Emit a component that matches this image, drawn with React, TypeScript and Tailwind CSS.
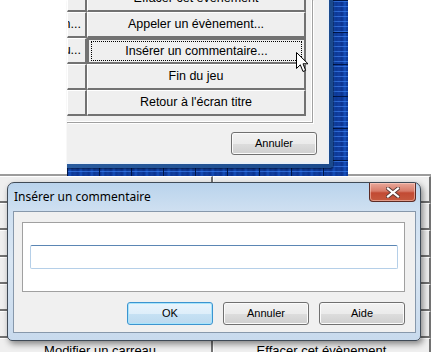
import React from "react";

const comic = "font-['Comic_Sans_MS','Liberation_Sans',sans-serif]";

const pattern =
    "bg-[#0b3796] bg-[linear-gradient(#001648_1px,transparent_1px),linear-gradient(90deg,#001648_1px,transparent_1px),repeating-linear-gradient(0deg,transparent_0px,transparent_3px,rgba(70,140,255,0.55)_3px,rgba(70,140,255,0.55)_4px),repeating-linear-gradient(90deg,#0a3290_0px,#1750bb_3px,#0b3796_5px,#123f9f_8px,#0a3290_11px)] bg-[length:32px_32px,32px_32px,7px_5px,11px_11px]";

const topRows = [
    {left: "", right: "Effacer cet évènement"},
    {left: "Afficher une animation...", right: "Appeler un évènement..."},
    {left: "Modifier un carreau...", right: "Insérer un commentaire...", focused: true},
    {left: "", right: "Fin du jeu"},
    {left: "", right: "Retour à l'écran titre"},
];

const EventButton: React.FC<{label: string; focused?: boolean; align?: "center" | "end"}> = ({label, focused, align = "center"}) => (
    <div
        className={`h-[26px] flex items-center bg-[#efefef] border-b-2 border-r-2 border-[#727272] ${focused ? "border-t-2 border-l-2" : "border-t border-l border-t-white border-l-white"} ${align === "end" ? "justify-end pr-[4px]" : "justify-center"} overflow-hidden whitespace-nowrap text-[12.5px] text-black ${comic}`}
    >
        {focused ? (
            <div className="mx-[2px] h-[20px] w-full flex items-center justify-center border border-dotted border-black">
                {label}
            </div>
        ) : (
            label
        )}
    </div>
);

const VistaButton: React.FC<{label: string; primary?: boolean}> = ({label, primary}) => (
    <div
        className={`w-[86px] h-[23px] rounded-[3px] border flex items-center justify-center text-[11px] font-medium text-black ${comic} ${
            primary
                ? "border-[#3c94d0] shadow-[inset_0_0_0_1px_#a8e4fb] bg-[linear-gradient(180deg,#e9f4fc_0%,#deeefa_50%,#c6e1f4_51%,#bcd9ef_100%)]"
                : "border-[#707070] shadow-[inset_0_0_0_1px_#fbfbfb] bg-[linear-gradient(180deg,#f2f2f2_0%,#ebebeb_50%,#dddddd_51%,#cfcfcf_100%)]"
        }`}
    >
        {label}
    </div>
);

const Cursor = () => (
    <svg className="absolute left-[296px] top-[52px]" width="13" height="21" viewBox="0 0 13 21">
        <path
            d="M0.5 0.5 L0.5 16.5 L4.3 12.8 L7 19.5 L9.6 18.4 L7 11.8 L12 11.8 Z"
            fill="#fff"
            stroke="#000"
            strokeWidth="1"
        />
    </svg>
);

export default function App() {
    return (
        <div className="relative w-[431px] h-[352px] overflow-hidden bg-white">
            {/* window behind the comment dialog */}
            <div className="absolute left-0 top-[174px] w-[431px] h-[190px] bg-[#efefef] border-t-2 border-[#9c9c9c]">
                <div className="grid grid-cols-[213px_218px]">
                    {Array.from({length: 7}).map((_, i) => (
                        <React.Fragment key={i}>
                            <div className={`h-[27px] flex items-center justify-center bg-[#efefef] border-b-2 border-r-2 border-[#727272] border-t border-t-white text-[13px] ${comic}`}>
                                {i === 6 ? "Modifier un carreau..." : ""}
                            </div>
                            <div className={`h-[27px] flex items-center justify-center bg-[#efefef] border-b-2 border-r-2 border-[#727272] border-t border-l border-t-white border-l-white text-[13px] ${comic}`}>
                                {i === 6 ? "Effacer cet évènement" : ""}
                            </div>
                        </React.Fragment>
                    ))}
                </div>
            </div>

            {/* desktop pattern around the event window */}
            <div className={`absolute left-[67px] top-0 w-[281px] h-[176px] ${pattern}`}/>

            {/* event commands window */}
            <div className="absolute left-[67px] top-0 w-[266px] h-[168px] bg-[linear-gradient(90deg,#2a5c9e,#1b4a8c)] pr-[4px] pb-[4px] rounded-br-[4px] shadow-[1px_1px_2px_rgba(0,0,0,0.5)]">
                <div className="w-full h-full bg-[#f0f0f0] border-r-2 border-b-2 border-[#e9eff7] overflow-hidden flex flex-col">
                    <div className="w-[246px] h-[123px] border-r border-b border-[#a0a0a0] shadow-[1px_1px_0_#fff] overflow-hidden">
                        <div className="w-[245px] h-[122px] border-r border-b border-white overflow-hidden">
                            <div className="-mt-[14px] grid grid-cols-[20px_219px]">
                                {topRows.map((row, i) => (
                                    <React.Fragment key={i}>
                                        <EventButton label={row.left} align="end"/>
                                        <EventButton label={row.right} focused={row.focused}/>
                                    </React.Fragment>
                                ))}
                            </div>
                        </div>
                    </div>
                    <div className="flex justify-end pr-[10px] pt-[9px]">
                        <VistaButton label="Annuler"/>
                    </div>
                </div>
            </div>

            <Cursor/>

            {/* comment dialog */}
            <div className="absolute left-[7px] top-[182px] w-[414px] h-[159px] rounded-t-[7px] rounded-b-[5px] border border-[#3f4a56] shadow-[2px_3px_6px_rgba(0,0,0,0.45)] bg-[linear-gradient(180deg,#b9d3ec_0%,#cfe0f1_18%,#d9e6f3_50%,#c8daed_100%)] flex flex-col pl-[5px] pr-[4px] pb-[7px]">
                <div className="relative h-[28px] flex items-center">
                    <span className="text-[12px] text-black font-['Noto_Sans','Open_Sans',sans-serif] pl-px -mt-[1px]">
                        Insérer un commentaire
                    </span>
                    <div className="absolute right-[0px] top-[0px] w-[47px] h-[19px] rounded-b-[4px] border border-t-0 border-[#5b2a24] bg-[linear-gradient(180deg,#e9a89a_0%,#d77b69_45%,#c24a33_55%,#c65a3f_100%)] shadow-[inset_0_0_0_1px_rgba(255,220,210,0.5)] flex items-center justify-center">
                        <svg width="14" height="11" viewBox="0 0 14 11">
                            <path d="M2 1.5 L12 9.5 M12 1.5 L2 9.5" stroke="#5a3a36" strokeWidth="4" strokeLinecap="square"/>
                            <path d="M2 1.5 L12 9.5 M12 1.5 L2 9.5" stroke="#ffffff" strokeWidth="2.2" strokeLinecap="square"/>
                        </svg>
                    </div>
                </div>
                <div className="flex-1 bg-[#f0f0f0] border border-[#8798ab] pl-[8px] pt-[10px]">
                    <div className="w-[383px] h-[70px] bg-white border border-[#a0a0a0] pl-[7px] pt-[22px]">
                        <div className="w-[368px] h-[24px] bg-white border border-[#b5cfe8] border-t-[#5b86b4] rounded-[2px]"/>
                    </div>
                    <div className="flex justify-end gap-[10px] w-[383px] mt-[10px]">
                        <VistaButton label="OK" primary/>
                        <VistaButton label="Annuler"/>
                        <VistaButton label="Aide"/>
                    </div>
                </div>
            </div>
        </div>
    );
}
